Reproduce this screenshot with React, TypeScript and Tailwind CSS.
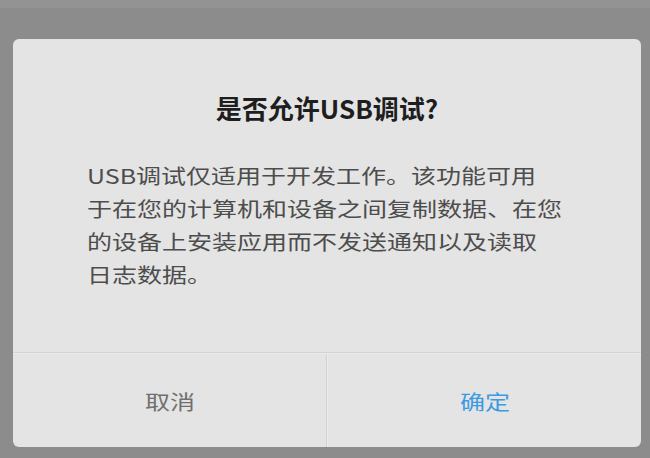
export default function App() {
  const lines = [
    "USB调试仅适用于开发工作。该功能可用",
    "于在您的计算机和设备之间复制数据、在您",
    "的设备上安装应用而不发送通知以及读取",
    "日志数据。",
  ];
  return (
    <div
      className="w-[650px] h-[458px] bg-[#8c8c8c] flex flex-col overflow-hidden"
      style={{ fontFamily: '"Noto Sans CJK SC", "Noto Sans", sans-serif' }}
    >
      <div className="h-[8px] bg-[#939393] shrink-0" />
      <div className="pt-[31px] pl-[13px] pr-[9px]">
        <div className="h-[408px] rounded-[6px] bg-[#e4e4e4] flex flex-col overflow-hidden">
          <div className="h-[313px] flex flex-col">
            <div className="pt-[52px] h-[86px] text-center text-[26px] leading-[34px] font-bold text-[#1e1e1e]">
              是否允许USB调试?
            </div>
            <div className="mt-[34px] pl-[74px] text-[20px] leading-[33px] text-[#4d4d4d]">
              {lines.map((l) => (
                <div key={l} className="h-[33px] whitespace-nowrap origin-left scale-x-[1.25]">
                  {l}
                </div>
              ))}
            </div>
          </div>
          <div className="h-px bg-[#d2d2d2]" />
          <div className="h-px bg-[#ececec]" />
          <div className="flex-1 flex">
            <div className="w-[313px] flex items-center justify-center pt-[2px] text-[20px] text-[#707070]">
              <span className="scale-x-[1.25] inline-block">取消</span>
            </div>
            <div className="w-px bg-[#d2d2d2]" />
            <div className="w-px bg-[#ececec]" />
            <div className="flex-1 flex items-center justify-center pt-[2px] text-[20px] text-[#3d9be2]">
              <span className="scale-x-[1.25] inline-block">确定</span>
            </div>
          </div>
        </div>
      </div>
    </div>
  );
}
